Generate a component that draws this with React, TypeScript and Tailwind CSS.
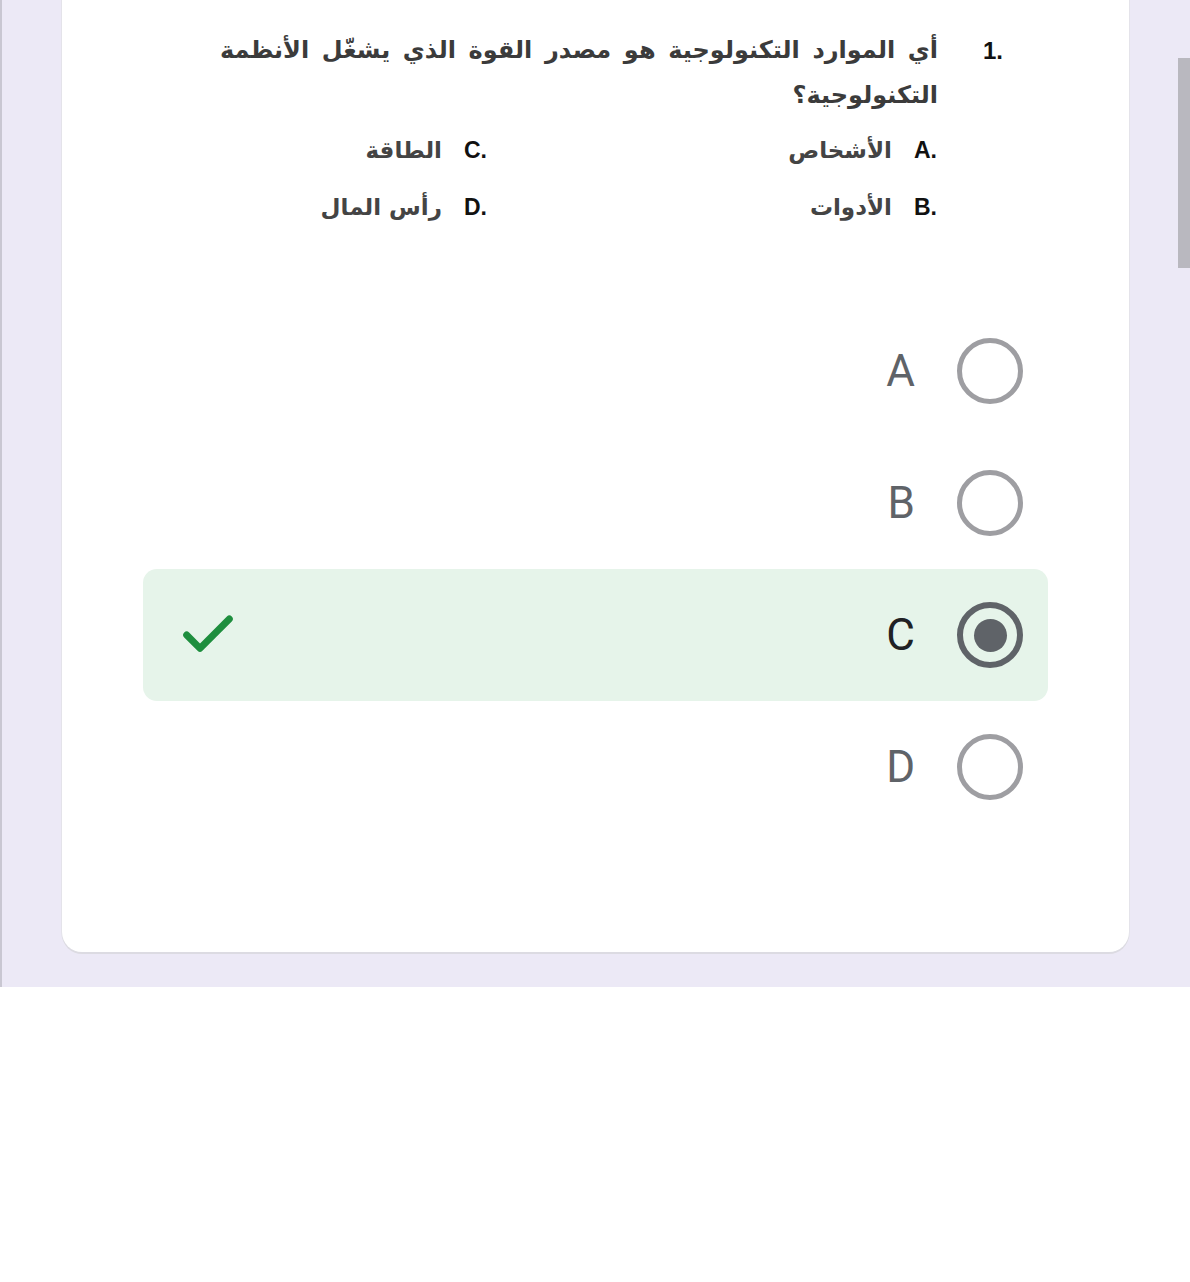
import { Check } from "lucide-react"

const options = ["A", "B", "C", "D"]
const selected = "C"

function Radio({ checked }: { checked: boolean }) {
  if (checked) {
    return (
      <div className="flex h-[66px] w-[66px] items-center justify-center rounded-full border-[6px] border-[#5f6368]">
        <div className="h-[33px] w-[33px] rounded-full bg-[#5f6368]" />
      </div>
    )
  }
  return <div className="h-[66px] w-[66px] rounded-full border-[5px] border-[#9e9ea2]" />
}

export default function App() {
  return (
    <div className="min-h-screen bg-white font-['Roboto',sans-serif]">
      <div className="relative h-[987px] border-l-2 border-[#c9c7d2] bg-[#ece9f6] pl-[60px] pr-[61px]">
        <div className="h-[952px] rounded-b-[20px] bg-white shadow-[0_2px_0_#dcdbe2,1px_0_0_#e4e3ea,-1px_0_0_#e4e3ea]">
          {/* question picture */}
          <div className="h-[255px] pt-[28px] font-['DejaVu_Sans',sans-serif]">
            <div className="flex justify-end pr-[124px]">
              <p
                dir="rtl"
                className="w-[718px] text-justify text-[24px] leading-[45px] font-bold text-[#3b3b3b] [text-align-last:right]"
              >
                أي الموارد التكنولوجية هو مصدر القوة الذي يشغّل الأنظمة التكنولوجية؟
              </p>
              <span className="ml-[45px] w-[22px] font-['Liberation_Sans',sans-serif] text-[24px] leading-[45px] font-bold text-[#111]">
                1.
              </span>
            </div>
            <div className="mt-[10px] flex w-[875px] justify-end">
              <div className="grid grid-cols-[450px_450px] gap-y-[12px] text-[23px] leading-[45px] font-bold">
                <Choice label="C" text="الطاقة" />
                <Choice label="A" text="الأشخاص" />
                <Choice label="D" text="رأس المال" />
                <Choice label="B" text="الأدوات" />
              </div>
            </div>
          </div>

          <div className="mt-[50px] px-[81px]">
            {options.map((o) => {
              const on = o === selected
              return (
                <div
                  key={o}
                  className={
                    on
                      ? "flex h-[132px] items-center rounded-[14px] bg-[#e6f4ea] pl-[33px] pr-[25px]"
                      : "flex h-[132px] items-center pl-[33px] pr-[25px]"
                  }
                >
                  {on && <Check className="h-[64px] w-[64px] text-[#1e8e3e]" strokeWidth={2.6} />}
                  <span
                    className={
                      on
                        ? "ml-auto mr-[42px] text-[44px] text-[#202124]"
                        : "ml-auto mr-[42px] text-[44px] text-[#5f6368]"
                    }
                  >
                    {o}
                  </span>
                  <Radio checked={on} />
                </div>
              )
            })}
          </div>
        </div>

        {/* scrollbar */}
        <div className="absolute right-0 top-[58px] h-[210px] w-[12px] bg-[#b9b8bf]" />
      </div>
    </div>
  )
}

function Choice({ label, text }: { label: string; text: string }) {
  return (
    <div className="flex items-center justify-end">
      <span dir="rtl" className="text-[#444]">
        {text}
      </span>
      <span className="ml-[22px] font-['Liberation_Sans',sans-serif] text-[23px] text-[#111]">
        {label}.
      </span>
    </div>
  )
}
